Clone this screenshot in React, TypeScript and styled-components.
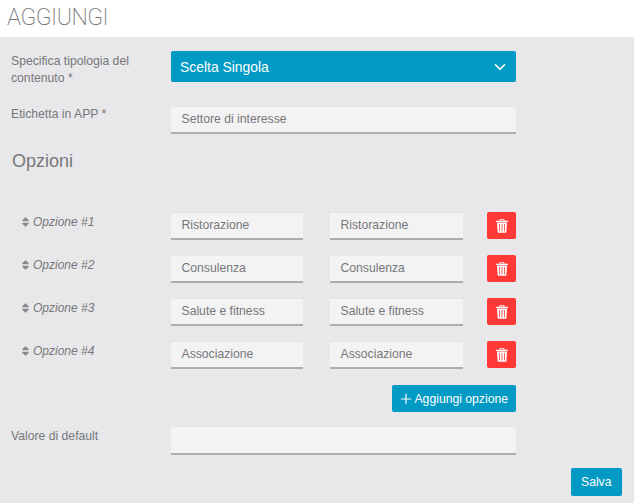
import React from "react"
import styled, { createGlobalStyle } from "styled-components"
import { FaSort } from "react-icons/fa"
import { ChevronDown, Plus } from "lucide-react"

const GlobalStyle = createGlobalStyle`
  html, body {
    margin: 0;
    padding: 0;
    background: #e8e8ea;
  }
  body {
    font-family: "Liberation Sans", Arial, sans-serif;
    color: #77777b;
  }
  * {
    box-sizing: border-box;
  }
`

const Page = styled.div`
  width: 634px;
  height: 503px;
  overflow: hidden;
`

const Header = styled.header`
  height: 37px;
  background: #fff;
  padding: 6px 0 0 7px;
  font-family: Roboto, sans-serif;
  font-weight: 200;
  font-size: 23px;
  line-height: 24px;
  letter-spacing: -0.45px;
  color: #77777b;
`

const Form = styled.div`
  padding: 14px 12px 0 11px;
`

const Row = styled.div<{ mb: number }>`
  display: flex;
  align-items: flex-start;
  width: 505px;
  margin-bottom: ${({ mb }) => mb}px;
`

const Label = styled.label<{ pt: number }>`
  width: 160px;
  flex: none;
  padding: ${({ pt }) => pt}px 30px 0 0;
  font-size: 12.2px;
  line-height: 17px;
  color: #77777b;
`

const Select = styled.div`
  flex: 1;
  height: 31px;
  display: flex;
  align-items: center;
  justify-content: space-between;
  padding: 0 7px 0 9px;
  background: #009ac5;
  border-radius: 2px;
  color: #fff;
  font-size: 13.9px;
`

const Input = styled.div<{ w?: number; h?: number }>`
  width: ${({ w }) => (w ? `${w}px` : "100%")};
  height: ${({ h }) => h ?? 28}px;
  padding: 0 0 2px 10.5px;
  display: flex;
  align-items: center;
  background: #f3f3f3;
  border-top: 1px solid #e4e4e4;
  border-bottom: 2px solid #adadad;
  font-size: 12.2px;
  color: #77777b;
`

const Heading = styled.h2`
  margin: 0;
  padding: 0 0 1px 1px;
  font-weight: 400;
  font-size: 18px;
  line-height: 24px;
  color: #77777b;
  border-bottom: 1px solid #e3e3e5;
`

const Options = styled.div`
  padding: 37px 0 1px;
`

const OptionRow = styled.div`
  display: flex;
  align-items: flex-start;
  height: 43px;
`

const OptionLabel = styled.div`
  width: 160px;
  flex: none;
  padding: 1px 0 0 10px;
  display: flex;
  align-items: center;
  gap: 3px;
  height: 18px;
  font-size: 12px;
  font-style: italic;
  color: #77777b;

  svg {
    color: #8a8a8e;
    width: 9px;
    height: 12px;
  }
`

const OptionFields = styled.div`
  display: grid;
  grid-template-columns: 159px 157px 29px;
  width: 345px;
`

const TrashButton = styled.button`
  width: 29px;
  height: 27px;
  padding: 0;
  border: 0;
  border-radius: 2px;
  background: #ff3a36;
  color: #fff;
  display: flex;
  align-items: center;
  justify-content: center;
`

const Actions = styled.div<{ pr: number; mb: number }>`
  display: flex;
  justify-content: flex-end;
  padding-right: ${({ pr }) => pr}px;
  margin-bottom: ${({ mb }) => mb}px;
`

const Button = styled.button<{ h: number; pl: number; pr: number }>`
  height: ${({ h }) => h}px;
  padding: 0 ${({ pr }) => pr}px 0 ${({ pl }) => pl}px;
  border: 0;
  border-radius: 2px;
  background: #009ac5;
  color: #fff;
  display: flex;
  align-items: center;
  font-family: inherit;
  font-size: 12.2px;
`

const Trash = () => (
  <svg width="12" height="14" viewBox="0 0 12 14" fill="#fff">
    <path d="M4 0.2h4l.9 1.6H12v1.1H0V1.8h3.1L4 .2zM4.8 1 4.4 1.8h3.2L7.2 1H4.8z" />
    <path d="M1 3.6h10l-.6 9.2c0 .6-.5 1-1 1H2.6c-.5 0-1-.4-1-1L1 3.6z" />
    <g fill="#ff3a36">
      <rect x="3.2" y="5" width=".8" height="7.4" />
      <rect x="5.6" y="5" width=".8" height="7.4" />
      <rect x="8" y="5" width=".8" height="7.4" />
    </g>
  </svg>
)

const options = ["Ristorazione", "Consulenza", "Salute e fitness", "Associazione"]

export default function App() {
  return (
    <Page>
      <GlobalStyle />
      <Header>AGGIUNGI</Header>
      <Form>
        <Row mb={19}>
          <Label pt={2}>Specifica tipologia del contenuto *</Label>
          <Select>
            Scelta Singola
            <ChevronDown size={18} strokeWidth={2.2} />
          </Select>
        </Row>
        <Row mb={15}>
          <Label pt={0}>Etichetta in APP *</Label>
          <Input>Settore di interesse</Input>
        </Row>
        <Heading>Opzioni</Heading>
        <Options>
          {options.map((o, i) => (
            <OptionRow key={o}>
              <OptionLabel>
                <FaSort />
                Opzione #{i + 1}
              </OptionLabel>
              <OptionFields>
                <Input w={132}>{o}</Input>
                <Input w={133}>{o}</Input>
                <TrashButton>
                  <Trash />
                </TrashButton>
              </OptionFields>
            </OptionRow>
          ))}
        </Options>
        <Actions pr={106} mb={14}>
          <Button h={27} pl={6} pr={8}>
            <Plus size={16} strokeWidth={1.7} />
            Aggiungi opzione
          </Button>
        </Actions>
        <Row mb={13}>
          <Label pt={2}>Valore di default</Label>
          <Input h={29} />
        </Row>
        <Actions pr={0} mb={0}>
          <Button h={28} pl={10.5} pr={10.5}>Salva</Button>
        </Actions>
      </Form>
    </Page>
  )
}
